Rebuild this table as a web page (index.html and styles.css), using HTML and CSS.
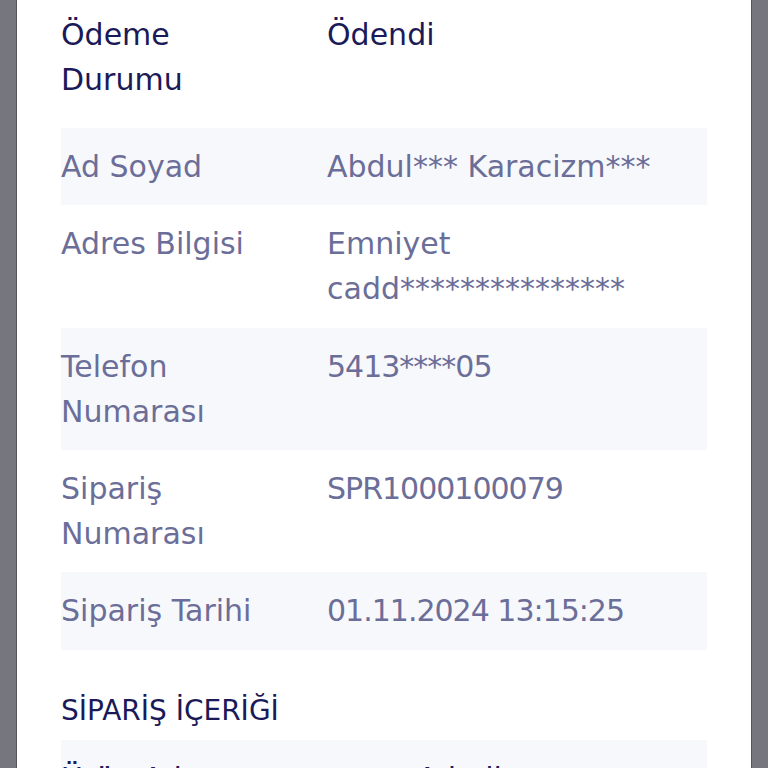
FILE: index.html
```html
<!DOCTYPE html>
<html lang="tr">
<head>
<meta charset="utf-8">
<title>Sipariş Detayı</title>
<link rel="stylesheet" href="styles.css">
</head>
<body>
<div class="card">
  <div class="row status">
    <div class="label">Ödeme Durumu</div>
    <div class="value">Ödendi</div>
  </div>
  <div class="table">
    <div class="row alt">
      <div class="label">Ad Soyad</div>
      <div class="value">Abdul*** Karacizm***</div>
    </div>
    <div class="row two">
      <div class="label">Adres Bilgisi</div>
      <div class="value">Emniyet cadd***************</div>
    </div>
    <div class="row alt">
      <div class="label">Telefon Numarası</div>
      <div class="value num">5413****05</div>
    </div>
    <div class="row">
      <div class="label">Sipariş Numarası</div>
      <div class="value num">SPR1000100079</div>
    </div>
    <div class="row alt">
      <div class="label">Sipariş Tarihi</div>
      <div class="value num">01.11.2024 13:15:25</div>
    </div>
  </div>
  <h2 class="section-title">SİPARİŞ İÇERİĞİ</h2>
  <div class="row alt head">
    <div class="label">Ürün Adı</div>
    <div class="value qty">Adedi</div>
  </div>
</div>
</body>
</html>
```
FILE: styles.css
```css
html, body {
  margin: 0;
  padding: 0;
}
body {
  background: #76767e;
  font-family: "DejaVu Sans", "Noto Sans", sans-serif;
  font-size: 30px;
  line-height: 45px;
  color: #6b6e98;
  height: 768px;
  overflow: hidden;
}
.card {
  margin: 0 16px;
  background: #ffffff;
  border-left: 1px solid #55555c;
  border-right: 1px solid #55555c;
  padding: 0 44px 0 44px;
  min-height: 768px;
}
.row {
  display: grid;
  grid-template-columns: 266px 1fr;
  padding: 16px 0;
}
.row.alt {
  background: #f7f8fb;
}
.row.two {
  padding-bottom: 17px;
}
.label {
  max-width: 220px;
}
.num {
  letter-spacing: -1px;
}
.status {
  padding: 12px 0 16px;
  color: #1b1a58;
}
.table {
  margin-top: 10px;
}
.table .row:last-child {
  padding-bottom: 17px;
}
.section-title {
  margin: 41px 0 9px;
  font-size: 28px;
  line-height: 40px;
  font-weight: normal;
  color: #1b1a58;
}
.head {
  color: #1b1a58;
  grid-template-columns: 356px 1fr;
}
```
